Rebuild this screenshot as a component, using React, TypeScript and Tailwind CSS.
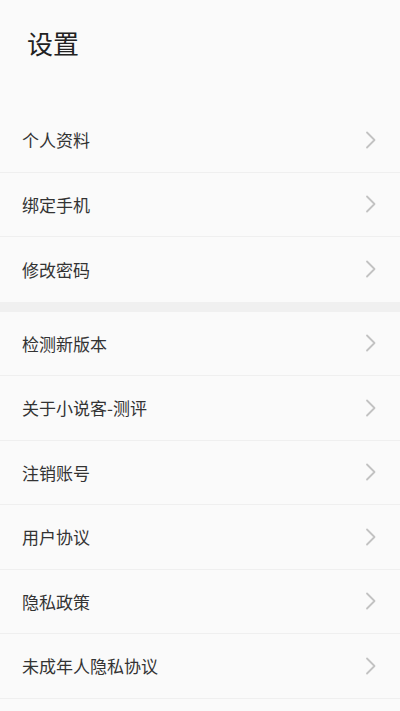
const groups = [
  ["个人资料", "绑定手机", "修改密码"],
  ["检测新版本", "关于小说客-测评", "注销账号", "用户协议", "隐私政策", "未成年人隐私协议"],
];

const Chevron = () => (
  <svg width="12" height="18" viewBox="0 0 12 18" fill="none">
    <path d="M2 1.5 L9.5 9 L2 16.5" stroke="#c2c2c2" strokeWidth="1.8" strokeLinecap="round" strokeLinejoin="round" />
  </svg>
);

const Row = ({ title, last }: { title: string; last?: boolean }) => (
  <div
    className={
      "flex h-[64.5px] items-center justify-between pl-[22px] pr-[23px] " +
      (last ? "" : "border-b border-[#efefef]")
    }
  >
    <span className="text-[17px] text-[#333333]">{title}</span>
    <Chevron />
  </div>
);

export default function App() {
  return (
    <div
      className="h-[711px] w-[400px] overflow-hidden bg-[#fafafa]"
      style={{ fontFamily: '"Noto Sans CJK SC", "Noto Sans", sans-serif' }}
    >
      <div className="h-[108px] pl-[27px] pt-[24px]">
        <h1 className="text-[26px] font-normal leading-[38px] text-[#222222]">设置</h1>
      </div>
      {groups.map((group, i) => (
        <div key={i}>
          {i > 0 && <div className="h-[10px] bg-[#f0f0f0]" />}
          {group.map((t, j) => (
            <Row key={t} title={t} last={i === 0 && j === group.length - 1} />
          ))}
        </div>
      ))}
    </div>
  );
}
